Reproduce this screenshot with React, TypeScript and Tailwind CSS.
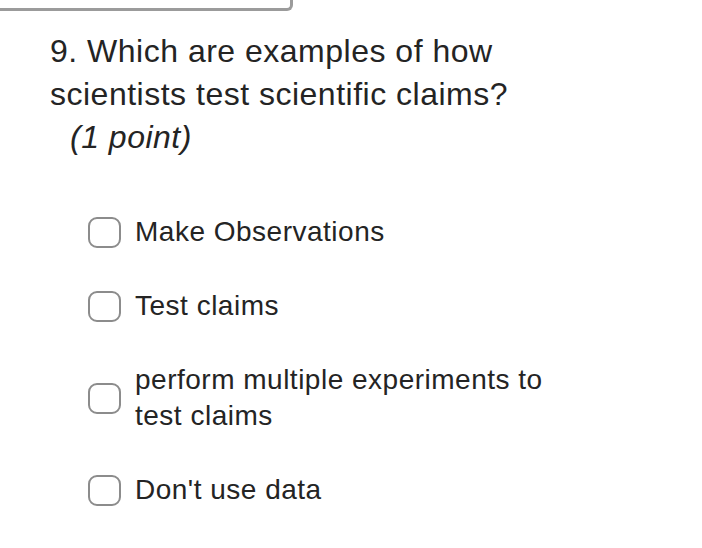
import React from "react";

const options = [
  "Make Observations",
  "Test claims",
  "perform multiple experiments to test claims",
  "Don't use data",
];

export default function App() {
  return (
    <div
      className="relative w-[702px] h-[548px] bg-white text-[#242424] overflow-hidden"
      style={{ fontFamily: '"Liberation Sans", Arial, sans-serif' }}
    >
      {/* edge of the previous card */}
      <div className="absolute -top-2 -left-2 w-[301px] h-[19px] border-b-[3px] border-r-[3px] border-[#9b9b9b] rounded-br-[6px]" />

      <div className="pt-[30px] pl-[50px]">
        <h1 className="w-[540px] text-[32px] leading-[43px] tracking-[0.5px] font-normal">
          9. Which are examples of how scientists test scientific claims?
        </h1>
        <p className="pl-[20px] text-[32px] leading-[43px] tracking-[0.5px] italic">(1 point)</p>
      </div>

      <ul className="mt-[55px] pl-[88px] flex flex-col gap-[38px]">
        {options.map((o) => (
          <li key={o} className="flex items-center gap-[14px]">
            <span className="shrink-0 w-[33px] h-[31px] rounded-[9px] border-[2.5px] border-[#8c8c8c]" />
            <span className="w-[435px] text-[28px] leading-[36px] tracking-[0.5px]">{o}</span>
          </li>
        ))}
      </ul>
    </div>
  );
}
